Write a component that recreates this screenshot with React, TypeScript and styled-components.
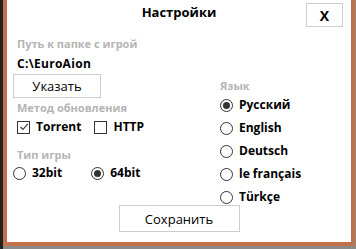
import styled, { createGlobalStyle } from "styled-components";

const GlobalStyle = createGlobalStyle`
  html, body {
    margin: 0;
    padding: 0;
    width: 356px;
    height: 249px;
    overflow: hidden;
    font-family: "Open Sans", "Noto Sans", sans-serif;
  }
`;

const Desktop = styled.div`
  width: 356px;
  height: 249px;
  background: linear-gradient(to right, #1f2320 0 3px, #8a8a8a 3px);
  box-sizing: border-box;
  padding-left: 3px;
`;

const Window = styled.div`
  width: 352px;
  height: 246px;
  box-sizing: border-box;
  background: #ffffff;
  border: 4px solid #c2714b;
  border-top: none;
  display: flex;
  flex-direction: column;
`;

const TitleBar = styled.div`
  position: relative;
  height: 37px;
  display: flex;
  justify-content: center;
  align-items: flex-start;
`;

const Title = styled.div`
  font-weight: 700;
  font-size: 13px;
  color: #000;
  margin-top: 3px;
`;

const CloseButton = styled.button`
  position: absolute;
  right: 8px;
  top: 3px;
  width: 37px;
  height: 24px;
  border: 1px solid #cfcfcf;
  background: #fff;
  font-family: inherit;
  font-weight: 700;
  font-size: 14px;
  color: #000;
  padding: 0;
`;

const Body = styled.div`
  display: flex;
  padding-left: 6px;
`;

const LeftColumn = styled.div`
  width: 207px;
  display: flex;
  flex-direction: column;
`;

const RightColumn = styled.div`
  display: flex;
  flex-direction: column;
  padding-top: 42px;
`;

const SectionLabel = styled.div<{ $indent?: number; $top?: number }>`
  font-size: 11px;
  font-weight: 700;
  color: #b4b4b4;
  line-height: 14px;
  padding-left: ${(p) => p.$indent ?? 4}px;
  margin-top: ${(p) => p.$top ?? 0}px;
`;

const PathText = styled.div`
  font-size: 12px;
  font-weight: 700;
  color: #000;
  padding-left: 4px;
  line-height: 16px;
  margin-top: 5px;
  letter-spacing: 0.3px;
`;

const PlainButton = styled.button<{ $w: number; $h: number }>`
  width: ${(p) => p.$w}px;
  height: ${(p) => p.$h}px;
  border: 1px solid #cccccc;
  background: #fff;
  font-family: inherit;
  font-size: 13px;
  color: #000;
  padding: 0;
`;

const ButtonSlot = styled.div`
  margin-top: 2px;
`;

const Row = styled.div<{ $gap: number; $top: number; $indent?: number }>`
  display: flex;
  align-items: center;
  gap: ${(p) => p.$gap}px;
  margin-top: ${(p) => p.$top}px;
  padding-left: ${(p) => p.$indent ?? 0}px;
`;

const Option = styled.label`
  display: flex;
  align-items: center;
  gap: 6px;
  font-size: 12px;
  font-weight: 700;
  color: #000;
  line-height: 16px;
`;

const Box = styled.span`
  width: 11px;
  height: 11px;
  border: 1px solid #333;
  display: inline-flex;
  align-items: center;
  justify-content: center;
  background: #fff;
`;

const Radio = styled.span<{ $on?: boolean }>`
  width: 11px;
  height: 11px;
  border: 1px solid #333;
  border-radius: 50%;
  display: inline-flex;
  align-items: center;
  justify-content: center;
  background: #fff;
  &::after {
    content: "";
    display: ${(p) => (p.$on ? "block" : "none")};
    width: 7px;
    height: 7px;
    border-radius: 50%;
    background: #333;
  }
`;

const LangList = styled.div`
  display: flex;
  flex-direction: column;
  gap: 7px;
  margin-top: 4px;
`;

const Footer = styled.div`
  display: flex;
  justify-content: center;
  margin-top: 0;
`;

const Check = () => (
  <svg width="10" height="10" viewBox="0 0 10 10">
    <path d="M1.5 5 L4 7.5 L8.8 1.8" fill="none" stroke="#333" strokeWidth="1.1" />
  </svg>
);

const languages = ["Русский", "English", "Deutsch", "le français", "Türkçe"];

export default function App() {
  return (
    <>
      <GlobalStyle />
      <Desktop>
        <Window>
          <TitleBar>
            <Title>Настройки</Title>
            <CloseButton>X</CloseButton>
          </TitleBar>
          <Body>
            <LeftColumn>
              <SectionLabel>Путь к папке с игрой</SectionLabel>
              <PathText>C:\EuroAion</PathText>
              <ButtonSlot>
                <PlainButton $w={88} $h={24}>Указать</PlainButton>
              </ButtonSlot>
              <SectionLabel $top={3}>Метод обновления</SectionLabel>
              <Row $gap={13} $top={4} $indent={4}>
                <Option>
                  <Box>
                    <Check />
                  </Box>
                  Torrent
                </Option>
                <Option>
                  <Box />
                  HTTP
                </Option>
              </Row>
              <SectionLabel $top={13}>Тип игры</SectionLabel>
              <Row $gap={29} $top={3}>
                <Option>
                  <Radio />
                  32bit
                </Option>
                <Option>
                  <Radio $on />
                  64bit
                </Option>
              </Row>
            </LeftColumn>
            <RightColumn>
              <SectionLabel $indent={0}>Язык</SectionLabel>
              <LangList>
                {languages.map((l, i) => (
                  <Option key={l}>
                    <Radio $on={i === 0} />
                    {l}
                  </Option>
                ))}
              </LangList>
            </RightColumn>
          </Body>
          <Footer>
            <PlainButton $w={121} $h={27}>Сохранить</PlainButton>
          </Footer>
        </Window>
      </Desktop>
    </>
  );
}
